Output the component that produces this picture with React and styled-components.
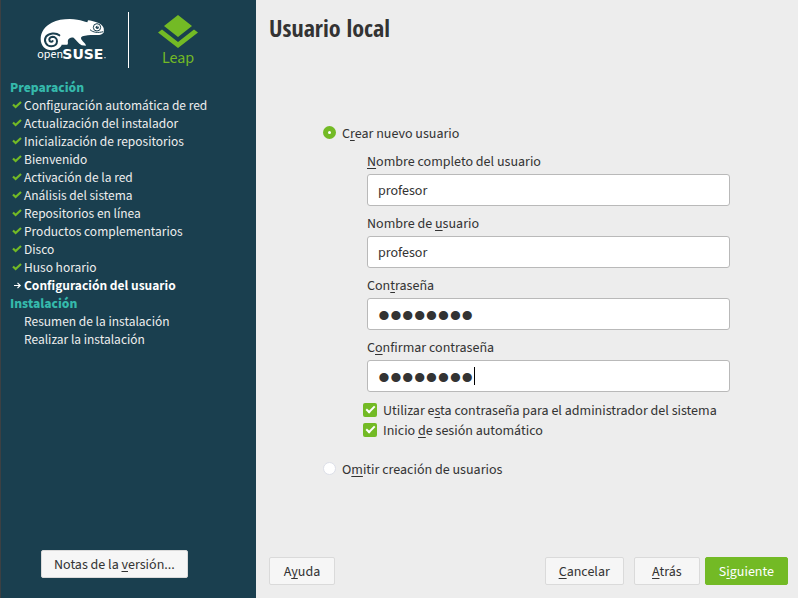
import React, { useState } from "react";
import styled, { createGlobalStyle, css } from "styled-components";

const GlobalStyle = createGlobalStyle`
  *, *::before, *::after { box-sizing: border-box; }
  body {
    margin: 0;
    background: #ededed;
    color: #333333;
    font: 14px/18px "Source Sans 3", "Noto Sans", sans-serif;
  }
  button, input { font: inherit; color: inherit; margin: 0; }
`;

const Screen = styled.div`
  display: flex;
  min-height: 100vh;
`;

const Sidebar = styled.aside`
  flex: 0 0 256px;
  display: flex;
  flex-direction: column;
  background: #1a3f4f;
  border-left: 1px solid #3c4043;
  color: #eeeeee;
  padding: 12px 9px 20px;
`;

const Brand = styled.header`
  display: flex;
  align-items: flex-start;
  padding-left: 24px;
`;

const SuseLogo = styled.svg`
  width: 78px;
  height: 56px;
`;

const OpenText = styled.text`
  fill: #ffffff;
  font: 36px "Source Sans 3", sans-serif;
`;

const SuseText = styled.text`
  fill: #ffffff;
  font: 700 42px "DejaVu Sans", sans-serif;
`;

const Divider = styled.div`
  width: 1px;
  height: 56px;
  margin: 0 29px 0 16px;
  background: #ffffff;
`;

const Product = styled.div`
  display: flex;
  flex-direction: column;
  align-items: center;
  color: #73ba25;
  font-size: 16px;
  line-height: 20px;
  padding-top: 3px;
`;

const LeapMark = styled.svg`
  width: 40px;
  height: 33px;
`;

const Steps = styled.nav`
  padding-top: 10px;
  font: 12px/18px "Noto Sans CJK SC", "Noto Sans", sans-serif;
`;

const Stage = styled.h2`
  margin: 0;
  font-size: 12px;
  line-height: 18px;
  font-weight: 900;
  color: #35b9ab;
`;

const StepList = styled.ol`
  list-style: none;
  margin: 0;
  padding: 0;
`;

const Step = styled.li`
  display: grid;
  grid-template-columns: 14px 1fr;
  align-items: center;
  ${(p) => p.$current && css`font-weight: 700; color: #ffffff;`}
`;

const StepIcon = styled.svg`
  width: 10px;
  height: 10px;
  margin-left: 2px;
`;

const Content = styled.main`
  flex: 1;
  min-width: 0;
  display: flex;
  flex-direction: column;
  padding: 12px 10px 13px 13px;
`;

const Title = styled.h1`
  margin: 0;
  font: 700 24px/32px "Open Sans Condensed", "Open Sans", sans-serif;
`;

const FormArea = styled.div`
  flex: 1;
  display: flex;
  align-items: center;
  justify-content: center;
  padding-right: 4px;
`;

const Form = styled.form`
  width: 100%;
  max-width: 407px;
`;

const Fields = styled.div`
  padding: 8px 0 0 44px;
`;

const Field = styled.div`
  display: flex;
  flex-direction: column;
  gap: 1px;
  padding-bottom: 7px;
`;

const Label = styled.label`
  line-height: 22px;
`;

const InputFrame = styled.div`
  position: relative;
`;

const TextInput = styled.input`
  display: block;
  width: 100%;
  height: 32px;
  padding: 2px 10px 0;
  border: 1px solid #b9b9b9;
  border-radius: 3px;
  background: #ffffff;
  outline: none;
  &[type="password"] {
    padding-top: 4px;
    font: 34px/26px "Liberation Sans", sans-serif;
    caret-color: transparent;
  }
`;

const Caret = styled.span`
  position: absolute;
  left: 107px;
  top: 7px;
  width: 1px;
  height: 18px;
  background: #000000;
`;

const CheckGroup = styled.div`
  padding: 1px 0 0 40px;
`;

const Choice = styled.label`
  display: flex;
  align-items: center;
  gap: 6px;
  height: 20px;
  line-height: 18px;
  white-space: nowrap;
  & > span { padding-top: 2px; }
`;

const OmitRow = styled.div`
  padding-top: 19px;
`;

const CheckBox = styled.input`
  appearance: none;
  flex: none;
  display: grid;
  place-items: center;
  width: 14px;
  height: 14px;
  border-radius: 2px;
  background: #ffffff;
  &:checked { background: #73ba25; }
  &:checked::after {
    content: "";
    width: 9px;
    height: 5px;
    margin-bottom: 3px;
    border: solid #ffffff;
    border-width: 0 0 2px 2px;
    transform: rotate(-45deg);
  }
`;

const Radio = styled.input`
  appearance: none;
  flex: none;
  width: 13px;
  height: 13px;
  border: 1px solid #dcdfe8;
  border-radius: 50%;
  background: #ffffff;
  &:checked { border: 5px solid #73ba25; }
`;

const Key = styled.span`
  text-decoration: underline;
  text-decoration-thickness: 1px;
  text-underline-offset: 2px;
  text-decoration-skip-ink: none;
`;

const Button = styled.button`
  min-width: 66px;
  height: 28px;
  padding: 2px 12px 0;
  border: 1px solid ${(p) => (p.$primary ? "#73ba25" : "#dadada")};
  border-radius: 2px;
  background: ${(p) => (p.$primary ? "#73ba25" : "#f6f6f6")};
  color: ${(p) => (p.$primary ? "#ffffff" : "#333333")};
  white-space: nowrap;
`;

const NotesRow = styled.div`
  margin-top: auto;
  padding-left: 31px;
`;

const Actions = styled.footer`
  display: flex;
  align-items: center;
  ${Button} { padding: 2px 13px 0; }
`;

const NavActions = styled.div`
  display: flex;
  gap: 10px;
  margin: 0 5px 0 auto;
`;

const prepSteps = [
  "Configuración automática de red",
  "Actualización del instalador",
  "Inicialización de repositorios",
  "Bienvenido",
  "Activación de la red",
  "Análisis del sistema",
  "Repositorios en línea",
  "Productos complementarios",
  "Disco",
  "Huso horario",
];

function Mnemonic({ text }) {
  const [before, rest] = text.split("_");
  return (
    <span>
      {before}
      <Key>{rest[0]}</Key>
      {rest.slice(1)}
    </span>
  );
}

function Done() {
  return (
    <StepIcon viewBox="0 0 10 10" aria-hidden="true">
      <path d="M1 4.500 3.6 7 9 2" fill="none" stroke="#73ba25" strokeWidth="2.200" />
    </StepIcon>
  );
}

function Current() {
  return (
    <StepIcon viewBox="0 0 10 10" aria-hidden="true">
      <path d="M2 5.5H8M5.5 2.8 8.2 5.5 5.5 8.2" fill="none" stroke="#fff" strokeWidth="1.2" />
    </StepIcon>
  );
}

function OpenSuse() {
  return (
    <SuseLogo viewBox="102 36 234 168" role="img" aria-label="openSUSE">
      <path
        fill="#fff"
        d="M155 151C136 151 122 137 122 117C122 95 135 79 155 68C177 57 210 55 232 59C244 61 254 65 262 67L264 61C274 62 280 64 287 66C300 69 307 75 311 84L312 96C308 104 300 105 291 105C277 105 266 105 255 107C243 109 240 112 246 121C249 127 257 129 258 137L245 136C235 131 229 120 221 113C214 111 207 113 204 120C202 126 206 129 202 134L186 134C187 125 184 119 187 114C192 137 177 151 155 151Z"
      />
      <path
        fill="none"
        stroke="#1a3f4f"
        strokeWidth="6"
        strokeLinecap="round"
        d="M178 106C168 97 146 99 138 110C130 123 139 139 154 139C165 139 171 132 171 124C171 115 164 110 157 110C149 111 146 118 149 123C152 126 156 126 158 123"
      />
      <circle cx="291" cy="82" r="11" fill="none" stroke="#1a3f4f" strokeWidth="3" />
      <circle cx="292" cy="82" r="5" fill="#1a3f4f" />
      <circle cx="294" cy="80" r="2" fill="#fff" />
      <path d="M270 89C280 98 294 99 310 95" fill="none" stroke="#1a3f4f" strokeWidth="3" />
      <OpenText x="112" y="174">open</OpenText>
      <SuseText x="187" y="176">SUSE</SuseText>
      <circle cx="315" cy="173" r="2" fill="#fff" />
    </SuseLogo>
  );
}

export default function App() {
  const [mode, setMode] = useState("create");
  return (
    <>
      <GlobalStyle />
      <Screen>
        <Sidebar>
          <Brand>
            <OpenSuse />
            <Divider />
            <Product>
              <LeapMark viewBox="0 0 40 33" aria-hidden="true">
                <path fill="#73ba25" d="M20 0 34 11 20 22 6 11ZM4 14.500 20 27 36 14.500 40 17.500 20 33 0 17.500Z" />
              </LeapMark>
              Leap
            </Product>
          </Brand>
          <Steps>
            <Stage>Preparación</Stage>
            <StepList>
              {prepSteps.map((name) => (
                <Step key={name}>
                  <Done />
                  {name}
                </Step>
              ))}
              <Step $current aria-current="step">
                <Current />
                Configuración del usuario
              </Step>
            </StepList>
            <Stage>Instalación</Stage>
            <StepList>
              <Step><span />Resumen de la instalación</Step>
              <Step><span />Realizar la instalación</Step>
            </StepList>
          </Steps>
          <NotesRow>
            <Button type="button"><Mnemonic text="Notas de la _versión..." /></Button>
          </NotesRow>
        </Sidebar>
        <Content>
          <Title>Usuario local</Title>
          <FormArea>
            <Form id="user-form" onSubmit={(e) => e.preventDefault()}>
              <Choice>
                <Radio type="radio" name="mode" checked={mode === "create"} onChange={() => setMode("create")} />
                <Mnemonic text="C_rear nuevo usuario" />
              </Choice>
              <Fields>
                <Field>
                  <Label htmlFor="fullname"><Mnemonic text="_Nombre completo del usuario" /></Label>
                  <TextInput id="fullname" type="text" defaultValue="profesor" />
                </Field>
                <Field>
                  <Label htmlFor="username"><Mnemonic text="Nombre de _usuario" /></Label>
                  <TextInput id="username" type="text" defaultValue="profesor" />
                </Field>
                <Field>
                  <Label htmlFor="password"><Mnemonic text="Con_traseña" /></Label>
                  <TextInput id="password" type="password" defaultValue="profesor" />
                </Field>
                <Field>
                  <Label htmlFor="confirm"><Mnemonic text="C_onfirmar contraseña" /></Label>
                  <InputFrame>
                    <TextInput id="confirm" type="password" defaultValue="profesor" />
                    <Caret />
                  </InputFrame>
                </Field>
              </Fields>
              <CheckGroup>
                <Choice>
                  <CheckBox type="checkbox" defaultChecked />
                  <Mnemonic text="Utilizar e_sta contraseña para el administrador del sistema" />
                </Choice>
                <Choice>
                  <CheckBox type="checkbox" defaultChecked />
                  <Mnemonic text="Inicio _de sesión automático" />
                </Choice>
              </CheckGroup>
              <OmitRow>
                <Choice>
                  <Radio type="radio" name="mode" checked={mode === "omit"} onChange={() => setMode("omit")} />
                  <Mnemonic text="O_mitir creación de usuarios" />
                </Choice>
              </OmitRow>
            </Form>
          </FormArea>
          <Actions>
            <Button type="button"><Mnemonic text="A_yuda" /></Button>
            <NavActions>
              <Button type="button"><Mnemonic text="_Cancelar" /></Button>
              <Button type="button"><Mnemonic text="_Atrás" /></Button>
            </NavActions>
            <Button $primary type="submit" form="user-form"><Mnemonic text="S_iguiente" /></Button>
          </Actions>
        </Content>
      </Screen>
    </>
  );
}
